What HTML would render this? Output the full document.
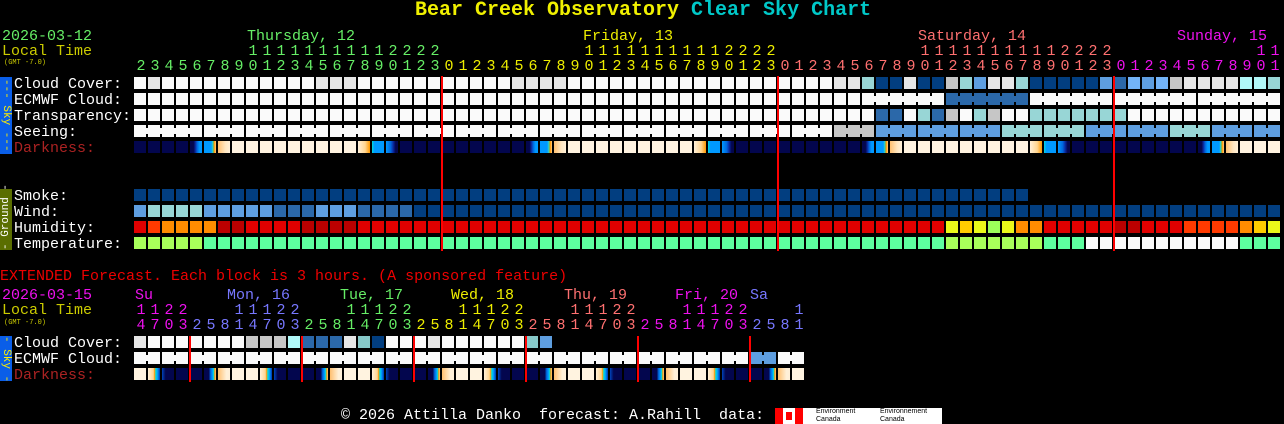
<!DOCTYPE html>
<html><head><meta charset="utf-8">
<style>
html,body{margin:0;padding:0;background:#000;}
body{width:1284px;height:424px;position:relative;overflow:hidden;font-family:"Liberation Mono","DejaVu Sans Mono",monospace;}
.t{position:absolute;font-size:15px;line-height:16px;white-space:pre;margin-top:3px;}
.b{position:absolute;width:12px;height:12px;}
.c{position:absolute;width:2px;height:6px;}
.r{position:absolute;width:2px;background:#f00;}
.d{position:absolute;width:14px;text-align:center;font-size:15px;line-height:16px;margin-top:3px;}
.v{margin-top:0;}
</style></head><body>
<div class="t v" style="left:415px;top:1px;font-size:20px;line-height:20px;font-weight:bold;color:#f0f000">Bear Creek Observatory <span style="color:#00c8c8">Clear Sky Chart</span></div>

<div class="t" style="left:2px;top:26px;color:#66ee66">2026-03-12</div>
<div class="t" style="left:2px;top:41px;color:#cccc00">Local Time</div>
<div class="t" style="left:4px;top:56px;font-size:7px;line-height:8px;color:#cccc00">(GMT -7.0)</div>
<div class="t" style="left:247px;top:26px;color:#66ee66">Thursday, 12</div>
<div class="t" style="left:583px;top:26px;color:#eeee00">Friday, 13</div>
<div class="t" style="left:918px;top:26px;color:#ff7070">Saturday, 14</div>
<div class="t" style="left:1177px;top:26px;color:#ee11ee">Sunday, 15</div>

<div style="position:absolute;left:0;top:77px;width:12px;height:77px;background:#0a5ee8"></div>
<div class="t v" style="left:0;top:77px;width:12px;height:77px;color:#ffee00;font-size:11px;line-height:12px;writing-mode:vertical-rl;text-align:center">--- Sky ---</div>
<div style="position:absolute;left:0;top:189px;width:12px;height:61px;background:#5a6e00"></div>
<div class="t v" style="left:0;top:189px;width:12px;height:61px;color:#fff;font-size:11px;line-height:12px;writing-mode:vertical-rl;transform:rotate(180deg);text-align:center">- Ground -</div>

<div class="t" style="left:14px;top:74px;color:#fff">Cloud Cover:</div>
<div class="t" style="left:14px;top:90px;color:#fff">ECMWF Cloud:</div>
<div class="t" style="left:14px;top:106px;color:#fff">Transparency:</div>
<div class="t" style="left:14px;top:122px;color:#fff">Seeing:</div>
<div class="t" style="left:14px;top:138px;color:#aa2222">Darkness:</div>
<div class="t" style="left:14px;top:186px;color:#fff">Smoke:</div>
<div class="t" style="left:14px;top:202px;color:#fff">Wind:</div>
<div class="t" style="left:14px;top:218px;color:#fff">Humidity:</div>
<div class="t" style="left:14px;top:234px;color:#fff">Temperature:</div>

<div class="t" style="left:0;top:266px;color:#ee0000">EXTENDED Forecast. Each block is 3 hours. (A sponsored feature)</div>
<div class="t" style="left:2px;top:285px;color:#ee11ee">2026-03-15</div>
<div class="t" style="left:2px;top:300px;color:#cccc00">Local Time</div>
<div class="t" style="left:4px;top:316px;font-size:7px;line-height:8px;color:#cccc00">(GMT -7.0)</div>
<div class="t" style="left:135px;top:285px;color:#ee11ee">Su</div>
<div class="t" style="left:227px;top:285px;color:#7777ff">Mon, 16</div>
<div class="t" style="left:340px;top:285px;color:#66ee66">Tue, 17</div>
<div class="t" style="left:451px;top:285px;color:#eeee00">Wed, 18</div>
<div class="t" style="left:564px;top:285px;color:#ff7070">Thu, 19</div>
<div class="t" style="left:675px;top:285px;color:#ee11ee">Fri, 20</div>
<div class="t" style="left:750px;top:285px;color:#7777ff">Sa</div>

<div style="position:absolute;left:0;top:336px;width:12px;height:45px;background:#0a5ee8"></div>
<div class="t v" style="left:0;top:336px;width:12px;height:45px;color:#ffee00;font-size:11px;line-height:12px;writing-mode:vertical-rl;text-align:center">- Sky -</div>
<div class="t" style="left:14px;top:333px;color:#fff">Cloud Cover:</div>
<div class="t" style="left:14px;top:349px;color:#fff">ECMWF Cloud:</div>
<div class="t" style="left:14px;top:365px;color:#aa2222">Darkness:</div>

<div class="t" style="left:341px;top:405px;color:#fff">© 2026 Attilla Danko  forecast: A.Rahill  data: </div>
<div style="position:absolute;left:775px;top:408px;width:167px;height:16px;background:#fff"></div>
<div style="position:absolute;left:775px;top:408px;width:8px;height:16px;background:#f00"></div>
<div style="position:absolute;left:795px;top:408px;width:8px;height:16px;background:#f00"></div>
<div style="position:absolute;left:786px;top:412px;width:6px;height:8px;background:#f00"></div>
<div class="t v" style="left:816px;top:408px;color:#000;font-family:'Liberation Sans',sans-serif;font-size:7px;line-height:8px">Environment
Canada</div>
<div class="t v" style="left:880px;top:408px;color:#000;font-family:'Liberation Sans',sans-serif;font-size:7px;line-height:8px">Environnement
Canada</div>

<div id="g"></div>
<script>
var g=document.getElementById('g'),h='';
var col={W:'#fafafa',L:'#e6e6e6',G:'#c6c6c6',C:'#98d6d6',B:'#023e80',M:'#2b68a9',S:'#5e9ee0',P:'#73b4f8',A:'#b0f8f8',K:'#86c8c8',
R:'#e00000',D:'#bb0000',O:'#ff3a00',N:'#ff8c00',Y:'#eaf81a',U:'#ffcc00',V:'#9cff5a',I:'#a8ff5a',T:'#5dff9f'};
function blk(x,y,c){h+='<div class="b" style="left:'+x+'px;top:'+y+'px;background:'+c+'"></div>';}
function con(x,y,c){h+='<div class="c" style="left:'+x+'px;top:'+(y+3)+'px;background:'+c+'"></div>';}
function row(s,y,grp){for(var i=0;i<s.length;i++){var ch=s[i];if(ch==' ')continue;var x=134+i*14;blk(x,y,col[ch]);
 if(grp&&i+1<s.length&&s[i+1]==ch&&grp(i))con(x+12,y,col[ch]);}}
function rep(c,n){return Array(n+1).join(c);}
var cc='WL'+rep('W',11)+'LLL'+rep('W',11)+'LLLL'+rep('W',15)+'WWWWLLCBBLBBGCSLLCBBBBBSMPSPGLLLLAAC';
row(cc,77);
var ec=rep('W',58)+'MMMMMM'+rep('W',18);
row(ec,93,function(i){return i>=52&&(i-52)%6!=5;});
var tr=rep('W',53)+'MMWCMGWCGWW'+'CCCCCCC'+rep('W',11);
row(tr,109);
var se=rep('W',50)+'GGG'+'SSSSSSSSS'+'CCCCCC'+'SSSSSS'+'CCC'+'SSSSS';
row(se,125,function(i){return (i-2)%3!=2;});
row(rep('B',64),189);
row('SCCCCSSSSSMMMSSSMMMMBB'+rep('B',60),205);
row('RONNNNDDRRRRDDDD'+rep('R',42)+'YUYVYNNRRRRRDDRRROOOONUY',221);
row('IIIII'+rep('T',53)+'IIIIIII'+'TTT'+rep('W',11)+'TTT',237);
var nv='#03064e';
function dk(k){
 if(k<4||k>18)return nv;
 if(k==4)return 'linear-gradient(90deg,'+nv+' 0,'+nv+' 30%,#0a2aa0 45%,#0066dd 60%,#0099ff 80%)';
 if(k==5)return 'linear-gradient(90deg,#0099ff 0,#0099ff 60%,#22ccdd 70%,#66bb66 78%,#ff9900 85%,#ffcc88 100%)';
 if(k==6)return 'linear-gradient(90deg,#ffc070 0,#ffe6c0 60%,#fff0d8 100%)';
 if(k==16)return 'linear-gradient(90deg,#fff0d8 0,#ffd590 60%,#ff9900 100%)';
 if(k==17)return 'linear-gradient(90deg,#00dddd 0,#0099ff 20%,#0099ff 100%)';
 if(k==18)return 'linear-gradient(90deg,#0099ff 0,#0066dd 40%,#0a2aa0 60%,'+nv+' 80%)';
 return '#fff3e0';}
for(var i=0;i<82;i++)blk(134+i*14,141,dk(i%24));
[441,777,1113].forEach(function(x){h+='<div class="r" style="left:'+x+'px;top:76px;height:175px"></div>';});
var dc=['#66ee66','#eeee00','#ff7070','#ee11ee'];
for(var i=0;i<82;i++){var hr=(i+2)%24,d=Math.floor((i+2)/24),x=134+i*14;
 if(hr>=10)h+='<div class="d" style="left:'+x+'px;top:41px;color:'+dc[d]+'">'+Math.floor(hr/10)+'</div>';
 h+='<div class="d" style="left:'+x+'px;top:56px;color:'+dc[d]+'">'+(hr%10)+'</div>';}
var ed=['#ee11ee','#7777ff','#66ee66','#eeee00','#ff7070','#ee11ee','#7777ff'];
for(var i=0;i<48;i++){var t=14+i*3,hr=t%24,d=Math.floor(t/24),x=134+i*14;
 if(hr>=10)h+='<div class="d" style="left:'+x+'px;top:300px;color:'+ed[d]+'">'+Math.floor(hr/10)+'</div>';
 h+='<div class="d" style="left:'+x+'px;top:315px;color:'+ed[d]+'">'+(hr%10)+'</div>';}
row('L'+rep('W',7)+'GGGAMMMLKBWW'+'WL'+'WWWWWW'+'KS',336);
row(rep('W',44)+'SSWW',352,function(i){return i%2==0;});
function ek(k){
 if(k==1)return 'linear-gradient(90deg,#fff0d8 0,#ffd590 45%,#ff9900 55%,#00dddd 65%,#0099ff 80%,#0033aa 100%)';
 if(k==2)return 'linear-gradient(90deg,#0044bb 0,'+nv+' 30%)';
 if(k==5)return 'linear-gradient(90deg,'+nv+' 0,'+nv+' 40%,#0066dd 55%,#0099ff 70%,#00dddd 80%,#ff9900 90%,#ffcc88 100%)';
 if(k==6)return 'linear-gradient(90deg,#ffc070 0,#fff0d8 70%)';
 if(k==7||k==0)return '#fff3e0';
 return nv;}
for(var i=0;i<48;i++){var t=(14+i*3)%24,k;
 k=t==14?0:t==17?1:t==20?2:t==23?3:t==2?4:t==5?5:t==8?6:7;
 blk(134+i*14,368,ek(k));}
[189,301,413,525,637,749].forEach(function(x){h+='<div class="r" style="left:'+x+'px;top:336px;height:46px"></div>';});
g.innerHTML=h;
</script>
</body></html>
